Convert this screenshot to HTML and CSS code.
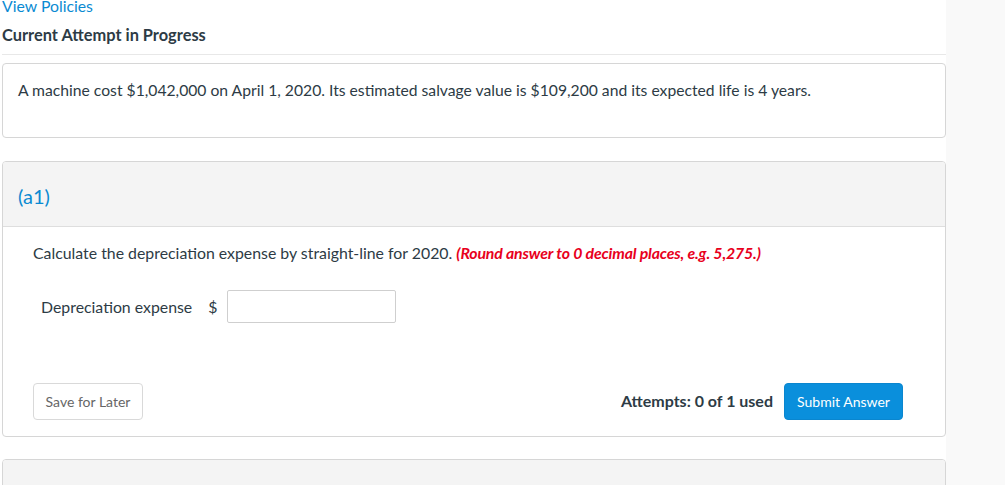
FILE: index.html
```html
<!DOCTYPE html>
<html>
<head>
<meta charset="utf-8">
<link rel="stylesheet" href="styles.css">
</head>
<body>
<div class="page">
  <main class="main">
    <a class="policies" href="#">View Policies</a>
    <h2 class="attempt-title">Current Attempt in Progress</h2>
    <div class="card intro">
      <p>A machine cost $1,042,000 on April 1, 2020. Its estimated salvage value is $109,200 and its expected life is 4 years.</p>
    </div>
    <div class="card part">
      <div class="part-head">(a1)</div>
      <div class="part-body">
        <p class="question">Calculate the depreciation expense by straight-line for 2020. <span class="hint">(Round answer to 0 decimal places, e.g. 5,275.)</span></p>
        <div class="answer-row">
          <span class="label">Depreciation expense</span>
          <span class="dollar">$</span>
          <input class="answer" type="text">
        </div>
        <div class="actions">
          <button class="btn save">Save for Later</button>
          <div class="submit-group">
            <span class="attempts">Attempts: 0 of 1 used</span>
            <button class="btn submit">Submit Answer</button>
          </div>
        </div>
      </div>
    </div>
    <div class="card part next">
      <div class="part-head">(a2)</div>
    </div>
  </main>
  <aside class="side"></aside>
</div>
</body>
</html>
```

FILE: styles.css
```css
html, body {
  margin: 0;
  padding: 0;
  height: 100%;
  overflow: hidden;
}
body {
  font-family: Lato, "Open Sans", sans-serif;
  color: #2d3b45;
  background: #f9f9f9;
}
.page {
  display: flex;
  height: 485px;
}
.main {
  width: 944px;
  padding-left: 2px;
  background: #fff;
  margin-top: -4px;
}
.side {
  flex: 1;
  background: #f9f9f9;
}
.policies {
  display: block;
  color: #0a8ad2;
  text-decoration: none;
  font-size: 15.8px;
  line-height: 20px;
}
.attempt-title {
  margin: 0;
  font-size: 16.4px;
  font-weight: 700;
  line-height: 20px;
  padding: 9px 0 9px;
  border-bottom: 1px solid #e8e8e8;
  color: #2d3b45;
}
.card {
  border: 1px solid #d6d6d6;
  border-radius: 4px;
  background: #fff;
}
.intro {
  margin-top: 8px;
  height: 75px;
  box-sizing: border-box;
  padding: 16px 15px;
}
.intro p {
  margin: 0;
  font-size: 15.7px;
  line-height: 20px;
}
.part {
  margin-top: 23px;
  overflow: hidden;
}
.part-head {
  background: #f4f4f4;
  border-bottom: 1px solid #dedede;
  height: 65px;
  box-sizing: border-box;
  padding: 23px 15px 0;
  font-size: 20px;
  line-height: 22px;
  color: #0a8ad2;
}
.part-body {
  padding: 15px 42px 16px 30px;
}
.question {
  margin: 0;
  font-size: 15.85px;
  line-height: 22px;
}
.hint {
  color: #e8001c;
  font-weight: 700;
  font-style: italic;
  letter-spacing: -0.15px;
}
.answer-row {
  display: flex;
  align-items: center;
  margin-top: 26px;
  padding-left: 8px;
  font-size: 15.85px;
}
.dollar {
  margin-left: 16px;
  margin-right: 10px;
}
.answer {
  width: 169px;
  height: 33px;
  box-sizing: border-box;
  border: 1px solid #cfcfcf;
  border-radius: 2px;
  margin: 0;
}
.actions {
  display: flex;
  justify-content: space-between;
  align-items: center;
  margin-top: 60px;
}
.btn {
  font-family: Lato, "Open Sans", sans-serif;
  font-size: 14px;
  height: 37px;
  border-radius: 4px;
  padding: 0 8px;
  cursor: pointer;
}
.save {
  background: #fff;
  border: 1px solid #d9d9d9;
  color: #666;
  width: 110px;
}
.submit-group {
  display: flex;
  align-items: center;
  gap: 11px;
}
.attempts {
  font-weight: 700;
  font-size: 16px;
  position: relative;
  top: -1px;
}
.submit {
  background: #0a8fdc;
  border: 1px solid #0a86cf;
  color: #fff;
  width: 119px;
}
.next {
  margin-top: 22px;
  height: 60px;
}
.next .part-head {
  color: #2d3b45;
}
```
